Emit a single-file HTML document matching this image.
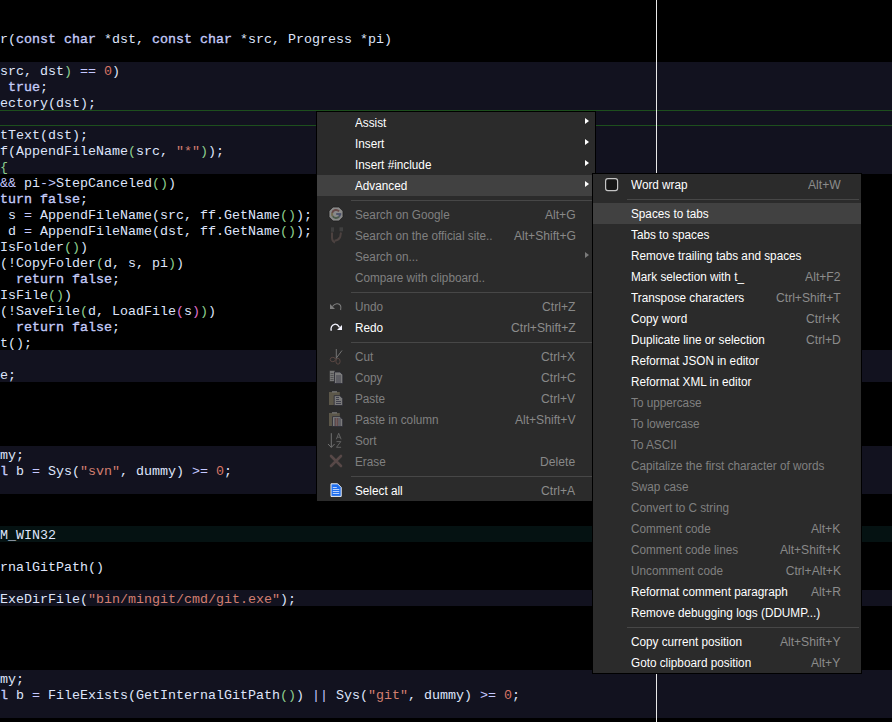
<!DOCTYPE html><html><head><meta charset="utf-8"><style>
*{margin:0;padding:0;box-sizing:border-box}
html,body{width:892px;height:722px;overflow:hidden;background:#000}
body{position:relative;font-family:"Liberation Sans",sans-serif}
.band{position:absolute;left:0;width:892px}
.cl{position:absolute;left:0;height:16px;line-height:16px;white-space:pre;font-family:"Liberation Mono",monospace;font-size:13.333px;color:#dfe5fb}
.cl .g{color:#8fd08f}.cl .p{color:#e070d0}.cl .s{color:#d27f70}.cl .n{color:#d87565}.cl .o{color:#c4c8ff}.cl .k{color:#c4cbf8;-webkit-text-stroke:0.35px #c4cbf8}
.vline{position:absolute;left:656px;top:0;width:1px;height:722px;background:#e8e8e8}
.gline{position:absolute;left:0;width:892px;height:1px;background:#1d4f1d}
.menu{position:absolute;background:#2b2b2b;border:1px solid #000}
.row{position:relative;height:21px;color:#fff;font-size:12.5px;line-height:21px}
.row.hov{background:#414141}
.row.dis{color:#808080}
.row .lb{position:absolute;left:38px;top:1px;white-space:pre;transform:scaleX(0.94);transform-origin:0 0}
.row .sc{position:absolute;right:19.5px;top:1px;white-space:pre;color:#8c8c8c;transform:scaleX(0.97);transform-origin:100% 0}
.row.dis .sc{color:#888}
.m2 .row .sc{right:20.5px}
.row .ar{position:absolute;left:268px;top:5.8px;width:0;height:0;border-left:4.7px solid #fff;border-top:3.8px solid transparent;border-bottom:3.8px solid transparent}
.row.dis .ar{border-left-color:#7a7a7a}
.ov{position:absolute;left:0;top:0;z-index:5}
.sep{position:relative;height:8px}
.sep i{position:absolute;left:34px;right:2px;top:4px;height:1px;background:#474747}
</style></head><body>
<div class="band" style="top:62px;height:112px;background:#12121f"></div>
<div class="band" style="top:350px;height:32px;background:#12121f"></div>
<div class="band" style="top:446px;height:48px;background:#12121f"></div>
<div class="band" style="top:526px;height:16px;background:#051212"></div>
<div class="band" style="top:590px;height:16px;background:#12121f"></div>
<div class="band" style="top:670px;height:48px;background:#12121f"></div>
<div class="gline" style="top:110px"></div><div class="gline" style="top:125px"></div>
<div class="cl" style="top:32px">r(<span class="k">const</span> <span class="k">char</span> *dst, <span class="k">const</span> <span class="k">char</span> *src, Progress *pi)</div>
<div class="cl" style="top:64px">src, dst<span class="g">)</span> <span class="o">==</span> <span class="n">0</span>)</div>
<div class="cl" style="top:80px"> <span class="k">true</span>;</div>
<div class="cl" style="top:96px">ectory(dst);</div>
<div class="cl" style="top:128px">tText(dst);</div>
<div class="cl" style="top:144px">f(AppendFileName<span class="g">(</span>src, <span class="s">&quot;*&quot;</span><span class="g">)</span>);</div>
<div class="cl" style="top:160px"><span class="g">{</span></div>
<div class="cl" style="top:176px"><span class="o">&amp;&amp;</span> pi<span class="o">-&gt;</span>StepCanceled<span class="g">()</span>)</div>
<div class="cl" style="top:192px"><span class="k">turn</span> <span class="k">false</span>;</div>
<div class="cl" style="top:208px"> s <span class="o">=</span> AppendFileName(src, ff.GetName<span class="g">()</span>);</div>
<div class="cl" style="top:224px"> d <span class="o">=</span> AppendFileName(dst, ff.GetName<span class="g">()</span>);</div>
<div class="cl" style="top:240px">IsFolder<span class="g">()</span>)</div>
<div class="cl" style="top:256px">(!CopyFolder<span class="g">(</span>d, s, pi<span class="g">)</span>)</div>
<div class="cl" style="top:272px">  <span class="k">return</span> <span class="k">false</span>;</div>
<div class="cl" style="top:288px">IsFile<span class="g">()</span>)</div>
<div class="cl" style="top:304px">(!SaveFile<span class="g">(</span>d, LoadFile<span class="p">(</span>s<span class="p">)</span><span class="g">)</span>)</div>
<div class="cl" style="top:320px">  <span class="k">return</span> <span class="k">false</span>;</div>
<div class="cl" style="top:336px">t();</div>
<div class="cl" style="top:368px">e;</div>
<div class="cl" style="top:448px">my;</div>
<div class="cl" style="top:464px"><span class="k">l</span> b <span class="o">=</span> Sys(<span class="s">&quot;svn&quot;</span>, dummy) <span class="o">&gt;=</span> <span class="n">0</span>;</div>
<div class="cl" style="top:528px">M_WIN32</div>
<div class="cl" style="top:560px">rnalGitPath()</div>
<div class="cl" style="top:592px">ExeDirFile(<span class="s">&quot;bin/mingit/cmd/git.exe&quot;</span>);</div>
<div class="cl" style="top:672px">my;</div>
<div class="cl" style="top:688px"><span class="k">l</span> b <span class="o">=</span> FileExists(GetInternalGitPath<span class="g">()</span>) <span class="o">||</span> Sys(<span class="s">&quot;git&quot;</span>, dummy) <span class="o">&gt;=</span> <span class="n">0</span>;</div>
<div class="vline"></div>
<div class="menu m1" style="left:316px;top:111px;width:280px">
<div class="row"><span class="lb">Assist</span><span class="ar"></span></div>
<div class="row"><span class="lb">Insert</span><span class="ar"></span></div>
<div class="row"><span class="lb">Insert #include</span><span class="ar"></span></div>
<div class="row hov"><span class="lb">Advanced</span><span class="ar"></span></div>
<div class="sep"><i></i></div>
<div class="row dis"><span class="lb">Search on Google</span><span class="sc">Alt+G</span></div>
<div class="row dis"><span class="lb">Search on the official site..</span><span class="sc">Alt+Shift+G</span></div>
<div class="row dis"><span class="lb">Search on...</span><span class="ar"></span></div>
<div class="row dis"><span class="lb">Compare with clipboard..</span></div>
<div class="sep"><i></i></div>
<div class="row dis"><span class="lb">Undo</span><span class="sc">Ctrl+Z</span></div>
<div class="row"><span class="lb">Redo</span><span class="sc">Ctrl+Shift+Z</span></div>
<div class="sep"><i></i></div>
<div class="row dis"><span class="lb">Cut</span><span class="sc">Ctrl+X</span></div>
<div class="row dis"><span class="lb">Copy</span><span class="sc">Ctrl+C</span></div>
<div class="row dis"><span class="lb">Paste</span><span class="sc">Ctrl+V</span></div>
<div class="row dis"><span class="lb">Paste in column</span><span class="sc">Alt+Shift+V</span></div>
<div class="row dis"><span class="lb">Sort</span></div>
<div class="row dis"><span class="lb">Erase</span><span class="sc">Delete</span></div>
<div class="sep"><i></i></div>
<div class="row"><span class="lb">Select all</span><span class="sc">Ctrl+A</span></div>
</div>
<div class="menu m2" style="left:592px;top:173px;width:270px">
<div class="row"><span class="lb">Word wrap</span><span class="sc">Alt+W</span></div>
<div class="sep"><i></i></div>
<div class="row hov"><span class="lb">Spaces to tabs</span></div>
<div class="row"><span class="lb">Tabs to spaces</span></div>
<div class="row"><span class="lb">Remove trailing tabs and spaces</span></div>
<div class="row"><span class="lb">Mark selection with t_</span><span class="sc">Alt+F2</span></div>
<div class="row"><span class="lb">Transpose characters</span><span class="sc">Ctrl+Shift+T</span></div>
<div class="row"><span class="lb">Copy word</span><span class="sc">Ctrl+K</span></div>
<div class="row"><span class="lb">Duplicate line or selection</span><span class="sc">Ctrl+D</span></div>
<div class="row"><span class="lb">Reformat JSON in editor</span></div>
<div class="row"><span class="lb">Reformat XML in editor</span></div>
<div class="row dis"><span class="lb">To uppercase</span></div>
<div class="row dis"><span class="lb">To lowercase</span></div>
<div class="row dis"><span class="lb">To ASCII</span></div>
<div class="row dis"><span class="lb">Capitalize the first character of words</span></div>
<div class="row dis"><span class="lb">Swap case</span></div>
<div class="row dis"><span class="lb">Convert to C string</span></div>
<div class="row dis"><span class="lb">Comment code</span><span class="sc">Alt+K</span></div>
<div class="row dis"><span class="lb">Comment code lines</span><span class="sc">Alt+Shift+K</span></div>
<div class="row dis"><span class="lb">Uncomment code</span><span class="sc">Ctrl+Alt+K</span></div>
<div class="row"><span class="lb">Reformat comment paragraph</span><span class="sc">Alt+R</span></div>
<div class="row"><span class="lb">Remove debugging logs (DDUMP...)</span></div>
<div class="sep"><i></i></div>
<div class="row"><span class="lb">Copy current position</span><span class="sc">Alt+Shift+Y</span></div>
<div class="row"><span class="lb">Goto clipboard position</span><span class="sc">Alt+Y</span></div>
</div>
<svg class="ov" width="892" height="722" viewBox="0 0 892 722">
<!-- google -->
<path d="M333.1 207 h5.8 l4.1 4.1 v5.8 l-4.1 4.1 h-5.8 l-4.1 -4.1 v-5.8 z" fill="#898989" stroke="#1e1e1e" stroke-width="0.8"/>
<path d="M339.06 211.43 A4 4 0 0 0 332.14 212.96" fill="none" stroke="#664a48" stroke-width="2"/>
<path d="M332.14 212.96 A4 4 0 0 0 332.72 216.29" fill="none" stroke="#716a4e" stroke-width="2"/>
<path d="M332.72 216.29 A4 4 0 0 0 339.06 216.57" fill="none" stroke="#4b5a4b" stroke-width="2"/>
<path d="M339.06 216.57 A4 4 0 0 0 340 214" fill="none" stroke="#4a5068" stroke-width="2"/>
<path d="M336.2 214 h5" fill="none" stroke="#4a5068" stroke-width="1.8"/>
<!-- magnet -->
<rect x="331" y="227.3" width="3" height="4.5" fill="#3e3e3e"/>
<rect x="339.5" y="227.3" width="3.5" height="4" fill="#404040"/>
<path d="M332 232.5 L332 238 Q332.3 241.5 335 242.5" fill="none" stroke="#4c4240" stroke-width="2"/>
<path d="M341 232.5 L340.2 237 Q338.5 240.3 334.5 240.8" fill="none" stroke="#4c4240" stroke-width="2"/>
<!-- undo -->
<path d="M330 304 L330 309 L335 309 Z" fill="#7c7c7c"/>
<path d="M332.5 306.5 C334.5 303.5 339 302.5 340.5 305.5 C341.2 307 341 308.5 340.6 310" fill="none" stroke="#7c7c7c" stroke-width="1.1"/>
<!-- redo -->
<path d="M342 325 L342 330 L337 330 Z" fill="#f4f4ff"/>
<path d="M331.3 330.8 C330.5 328 331.5 325 334.5 324.3 C336.5 323.9 338 324.8 339.5 327.3" fill="none" stroke="#f4f4ff" stroke-width="1.3"/>
<!-- cut -->
<path d="M336.3 349 L336.3 358.5 M342 350.5 L336 358.5" stroke="#7a7a7a" stroke-width="0.9"/>
<ellipse cx="332.8" cy="359.5" rx="2.6" ry="2.2" fill="none" stroke="#5e4a45" stroke-width="0.9"/>
<ellipse cx="338" cy="361.3" rx="2.1" ry="2.9" fill="none" stroke="#5e4a45" stroke-width="0.9"/>
<!-- copy -->
<rect x="329.5" y="370.5" width="5.5" height="11" fill="#767676" stroke="#2e2e2e" stroke-width="0.6"/>
<path d="M330.5 373.5h3M330.5 375.5h3M330.5 377.5h3M330.5 379.5h3" stroke="#4a4a4a" stroke-width="0.8"/>
<path d="M334.5 372 h5.5 l2.8 2.8 v8.7 h-8.3 z" fill="#7a7a7a" stroke="#2a2a33" stroke-width="0.8"/>
<path d="M336 376h5M336 378h5M336 380h5M336 382h5" stroke="#3a3a48" stroke-width="0.9"/>
<!-- paste -->
<rect x="329" y="392" width="10.8" height="13" fill="#5c5749"/>
<path d="M332 392.5 h5 v-1.3 h-5 z" fill="#777"/>
<path d="M334.2 395.6 h5.6 l2.9 2.9 v7 h-8.5 z" fill="#7a7a7a" stroke="#2a2a33" stroke-width="0.8"/>
<path d="M336 397.5h3M336 399.5h3M336 401.5h5M336 403.5h5" stroke="#3a3a48" stroke-width="0.9"/>
<!-- paste in column -->
<rect x="329" y="413" width="10.8" height="13" fill="#5c5749"/>
<path d="M332 413.5 h5 v-1.3 h-5 z" fill="#777"/>
<path d="M332.5 416.6 h7.3 l2.9 2.9 v7 h-10.2 z" fill="#7a7a7a" stroke="#2a2a33" stroke-width="0.8"/>
<path d="M334 419h1.5M334 421h1.5M334 423h1.5M334 425h1.5M338 419h3M338 421h3M338 423h3M338 425h3" stroke="#3a3a48" stroke-width="0.9"/>
<path d="M335.8 418v8M337.3 418v8" stroke="#5e3838" stroke-width="0.9"/>
<!-- sort -->
<path d="M331.3 433.2 V447.3 M328 444 L331.3 447.4 L334.6 444" fill="none" stroke="#7a7a7a" stroke-width="0.9"/>
<path d="M336.3 439.3 L338.7 433.3 L341.1 439.3 M337.2 437.2 h3" fill="none" stroke="#6e6e6e" stroke-width="0.8"/>
<path d="M336.5 441.6 h4.3 L336.5 447.3 h4.6" fill="none" stroke="#6e6e6e" stroke-width="0.8"/>
<!-- erase -->
<path d="M331 456 L341 466 M341 456 L331 466" stroke="#574847" stroke-width="2.6" stroke-linecap="round"/>
<!-- select all -->
<path d="M331 483.8 h6.6 l3.6 3.6 v9 h-10.2 z" fill="#1f6ff0" stroke="#f2f2f2" stroke-width="1"/>
<path d="M332.8 487.5h4M332.8 489.5h6.5M332.8 491.5h6.5M332.8 493.5h6.5" stroke="#c8dcff" stroke-width="0.9"/>
<!-- checkbox -->
<rect x="605.6" y="178.6" width="12" height="12" rx="2.3" fill="#161616" stroke="#c4c4c4" stroke-width="1.2"/>
</svg>
</body></html>
